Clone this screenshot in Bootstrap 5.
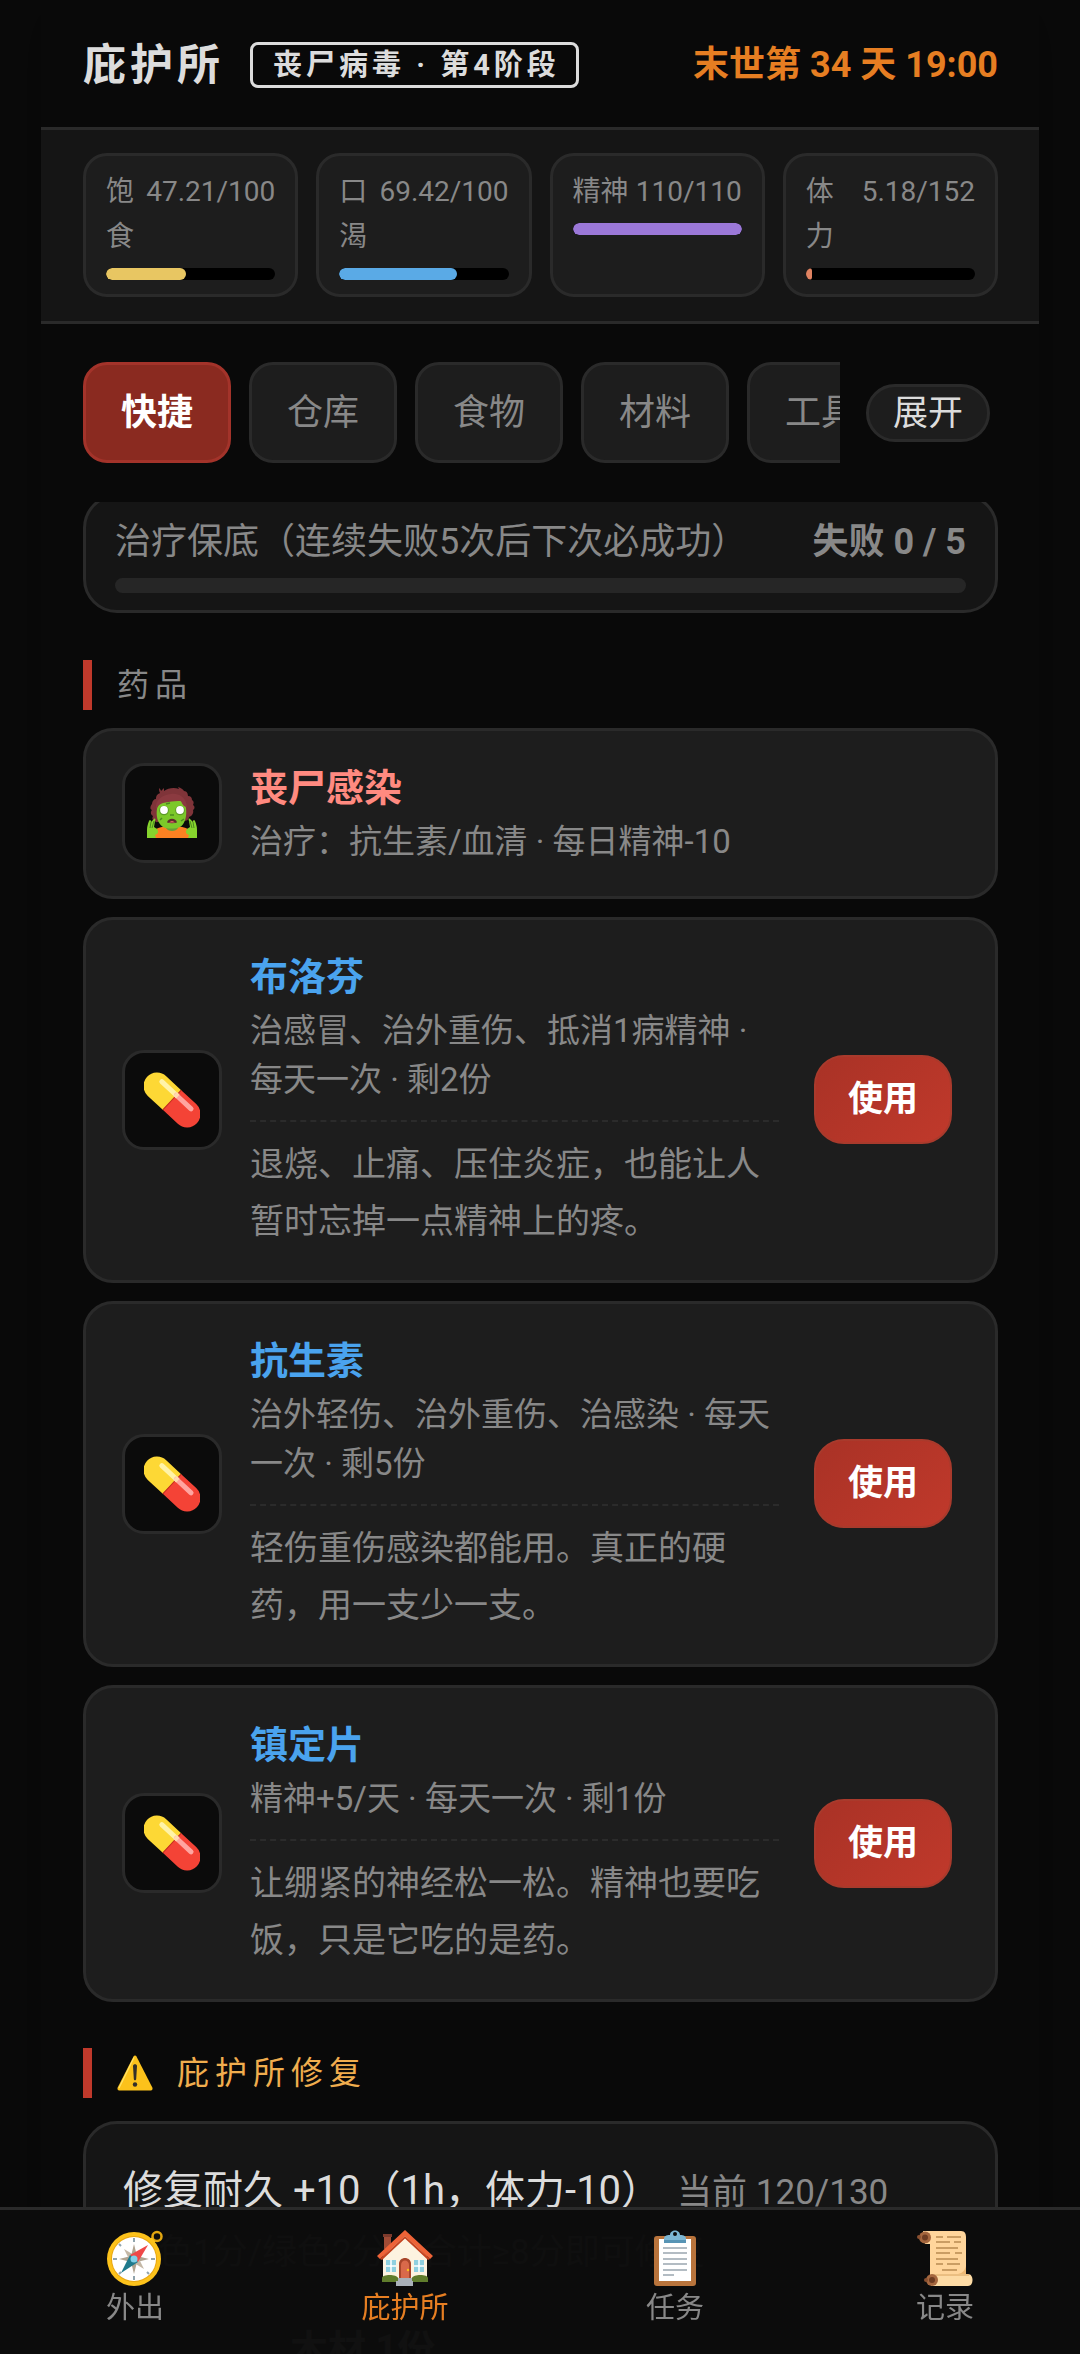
<!DOCTYPE html>
<html lang="zh-CN">
<head>
    <meta charset="UTF-8">
    <meta name="viewport" content="width=device-width, initial-scale=1">
    <title>庇护所</title>
    <link href="https://cdn.jsdelivr.net/npm/bootstrap@5.3.2/dist/css/bootstrap.min.css" rel="stylesheet">
    <style>
        :root {
            --bg: #0a0a0a;
            --panel: #151515;
            --tile: #1d1d1d;
            --line: #2a2a2a;
            --muted: #888;
            --light: #dcdcdc;
            --red: #c0392b;
            --orange: #e67e22;
        }
        body {
            background: var(--bg);
            color: var(--light);
            font-family: Roboto, "Noto Sans CJK SC", sans-serif;
            font-size: 36px;
        }
        h1, h2, h3, p { margin: 0; }
        .app-wrap { padding: 0 41px; }
        .shell { background: #090909; box-shadow: 0 0 60px rgba(0, 0, 0, .3); }

        /* header */
        .top-bar { height: 130px; padding: 3px 41px 0 42px; border-bottom: 3px solid var(--line); }
        .top-group { gap: 26px; }
        .top-title { font-size: 43px; line-height: 60px; font-weight: 700; letter-spacing: 4px; }
        .stage-tag {
            border: 3px solid var(--light); border-radius: 8px; padding: 0 16px 0 20px;
            font-size: 29px; line-height: 40px; font-weight: 700; letter-spacing: 4px;
        }
        .clock { color: var(--orange); font-size: 36px; font-weight: 700; line-height: 50px; }

        /* stats */
        .stats { display: grid; grid-template-columns: repeat(4, 1fr); gap: 18px; padding: 23px 41px 24px 42px; background: var(--panel); border-bottom: 3px solid var(--line); }
        .stat { background: var(--tile); border: 3px solid var(--line); border-radius: 24px; padding: 13px 20px 14px; color: var(--muted); font-size: 28px; line-height: 45px; }
        .meter { height: 12px; margin-top: 9px; border-radius: 6px; background: #000; overflow: hidden; }
        .meter-fill { height: 100%; border-radius: 6px; }
        .fill-food { background: #e8c662; }
        .fill-water { background: #5aaae6; }
        .fill-mind { background: #9b78d8; }
        .fill-body { background: #e08362; }

        /* tabs */
        .tab-row { padding: 38px 49px 39px 42px; gap: 26px; }
        .tab-list { gap: 18px; min-width: 0; }
        .tab-btn { flex: none; padding: 2px 35px 0; border: 3px solid var(--line); border-radius: 24px; background: var(--tile); color: var(--muted); font-size: 36px; line-height: 93px; }
        .tab-btn.active { background: #8a2a20; border-color: #a3332a; color: #fff; font-weight: 700; }
        .expand-btn { flex: none; padding: 2px 24px 0; border: 3px solid var(--line); border-radius: 29px; background: var(--tile); color: var(--light); font-size: 35px; line-height: 50px; }

        /* scrolling list, slightly scrolled past its top */
        .scroller { min-height: 0; overflow: hidden; padding: 0 41px 0 42px; }
        .scroller-inner { margin-top: -8px; }
        .panel { background: var(--panel); border: 3px solid var(--line); border-radius: 34px; }
        .pity { padding: 17px 29px; color: var(--muted); line-height: 56px; }
        .pity-bar { height: 15px; margin-top: 8px; border-radius: 8px; background: #262626; }
        .section-head { margin: 47px 0 18px; padding-left: 25px; border-left: 9px solid var(--red); color: var(--muted); font-size: 32px; line-height: 50px; font-weight: 400; letter-spacing: 6px; }
        .section-warn { color: #f0ad4e; margin: 46px 0 23px; gap: 24px; }

        .item { background: var(--tile); border: 3px solid var(--line); border-radius: 30px; padding: 29px 43px 30px 36px; gap: 28px; }
        .item-icon { flex: none; width: 100px; height: 100px; border: 3px solid var(--line); border-radius: 22px; background: #0b0b0b; }
        .item-body { flex: 1; min-width: 0; }
        .item-name { font-size: 38px; line-height: 57px; font-weight: 700; color: #4aa3ee; }
        .item-name.danger { color: #ff8a80; }
        .item-effect { font-size: 33px; line-height: 49px; color: var(--muted); }
        .item-desc { margin-top: 16px; padding-top: 14px; border-top: 2px dashed #2b2b2b; font-size: 34px; line-height: 57px; color: var(--muted); }
        .use-btn { flex: none; margin-left: 7px; padding: 0 32px; border: 2px solid #a93a2c; border-radius: 30px; background: linear-gradient(135deg, #a93226, var(--red)); color: #fff; font-size: 35px; line-height: 85px; font-weight: 700; }

        .repair { padding: 37px 37px; }
        .repair-top { gap: 16px; }
        .repair-title { font-size: 40px; line-height: 60px; }
        .repair-now, .repair-hint { font-size: 35px; line-height: 60px; color: var(--muted); }
        .material { margin-top: 6px; }
        .material .item-icon { margin-top: 10px; }
        .material .item-name { color: var(--light); }

        /* bottom nav */
        .bottom-nav { background: rgba(12, 12, 12, .98); border-top: 3px solid var(--line); padding: 20px 0 24px; }
        .nav-cell { color: var(--muted); font-size: 29px; line-height: 44px; text-decoration: none; }
        .nav-cell.active { color: var(--orange); }
    </style>
</head>
<body>

<!-- icon sprites -->
<svg class="d-none" aria-hidden="true">
    <symbol id="pill" viewBox="0 0 56 56">
        <g transform="rotate(43 28 28)">
            <path d="M28 14.5H7.5a13.5 13.5 0 0 0 0 27H28z" fill="#fdd835"/>
            <path d="M28 14.5h20.500a13.500 13.500 0 0 1 0 27H28z" fill="#f44336"/>
            <path d="M28 14.500v27" stroke="#c8321f" stroke-width="1"/>
            <path d="M8 21.500h20" stroke="#fff3a8" stroke-width="5" stroke-linecap="round"/>
            <path d="M28 21.500h20" stroke="#ffa5a0" stroke-width="5" stroke-linecap="round"/>
            <path d="M26 19h4v5h-4z" fill="#ffd9b0"/>
        </g>
    </symbol>
    <symbol id="zombie" viewBox="0 0 52 52">
        <path d="M6 51V47c2-6 10-8 20-8s18 2 20 8v4z" fill="#fb8122"/>
        <path d="M20 36h12v5c-2 4-10 4-12 0z" fill="#689f38"/>
        <path d="M9 34c-3-1-3-3-2-5-2-1-3-4-1-6-3-1-1-5 0-6 0-3 2-5 4-5 0-4 2-5 4-6-1-2-1-3-1-5 1 1 2 2 2 3 1-1 2-2 3-3v3c4-3 10-4 15-2l-1-2c3 1 5 2 6 4 3 0 4 3 4 5 3 0 4 2 4 4 2 1 2 3 1 5 2 1 2 4 0 5 1 3-1 6-4 7 0 3-3 4-5 4H14c-2 1-4 2-5 0z" fill="#7f3439"/>
        <path d="M11 22c1-11 27-14 29-1 1 8-1 16-6 19-5 2-13 2-17 0-6-4-7-12-6-18z" fill="#7cc82a"/>
        <path d="M10 22c-1-9 6-14 15-15 9-1 15 4 16 13-3 0-5-3-6-6-8 0-18 1-22 4-1 1-2 3-3 4z" fill="#8b3a40"/>
        <circle cx="18" cy="23.500" r="4.800" fill="#5d9a28"/><circle cx="34" cy="23.500" r="4.800" fill="#5d9a28"/>
        <circle cx="18" cy="23" r="3.900" fill="#fff"/><circle cx="34" cy="23" r="3.900" fill="#fff"/>
        <path d="M24 28h4M16 31l-2 2M38 32l-3 2M20 17l4-1" stroke="#4b8a20" stroke-width="1.500"/>
        <path d="M21 35.500c1-5 9-5 10 0-3 1-7 1-10 0z" fill="#5d2c2c"/>
        <path d="M23 35.500c2-2 4-2 6 0z" fill="#ec6a6a"/>
        <path d="M1 51V43c0-4 1-6 2-9 1-2 2-1 2 1l3-3c1-1 2 0 1 2l-1 6 3 2c2 3 1 5-2 6l1 3z" fill="#86d42d"/>
        <path d="M51 51V43c0-4-1-6-2-9-1-2-2-1-2 1l-3-3c-1-1-2 0-1 2l1 6-3 2c-2 3-1 5 2 6l-1 3z" fill="#86d42d"/>
        <path d="M5 35l-1 6M8 34l-2 7M47 35l1 6M44 34l2 7" stroke="#4b8a20" stroke-width="1"/>
    </symbol>
    <symbol id="warning" viewBox="0 0 36 36">
        <path d="M16.500 1.500c.7-1.300 2.300-1.300 3 0l15.800 31c.7 1.500 0 2.900-1.600 2.900H2.300C.7 35.400 0 34 .7 32.500z" fill="#fcc21b"/>
        <path d="M17 2.500 2 33" stroke="#ffe36b" stroke-width="1.200"/>
        <path d="M16 11c0-2.400 4-2.400 4 0l-.8 13c-.2 1.800-2.200 1.800-2.400 0z" fill="#33302a"/>
        <circle cx="18" cy="29.500" r="2.200" fill="#33302a"/>
    </symbol>
    <symbol id="compass" viewBox="0 0 56 56">
        <circle cx="50" cy="6.500" r="4.500" fill="none" stroke="#e2a610" stroke-width="2.500"/>
        <path d="M43 9l4 4" stroke="#fcc21b" stroke-width="4"/>
        <circle cx="27" cy="29" r="27" fill="#fcc21b"/>
        <circle cx="27" cy="29" r="23" fill="#e9a712"/>
        <circle cx="27" cy="29" r="22" fill="#fff"/>
        <path d="M27 8v4M27 46v4M6 29h4M44 29h4M12 14l2 2M42 44l-2-2M12 44l2-2" stroke="#90a4ae" stroke-width="2"/>
        <path d="M27 14l3 12 12 3-12 3-3 12-3-12-12-3 12-3z" fill="#b0a390"/>
        <path d="M17 19l10 6 5 4 5 10-10-6-5-4z" fill="#c4b8a6"/>
        <path d="M41 15 31 32l-8-7z" fill="#ef4848"/>
        <path d="M14 43l9-18 8 7z" fill="#1f7a8c"/>
        <circle cx="27" cy="29" r="3.500" fill="#81cfe8"/>
    </symbol>
    <symbol id="house" viewBox="0 0 56 56">
        <path d="M7 5h7v14H7z" fill="#a04b35"/><path d="M6 4h9v3H6z" fill="#7c3a2c"/>
        <path d="M6 26 28 5l22 21v25H6z" fill="#fdf3e0"/>
        <path d="M28 0 56 26l-3 3L28 6 3 29l-3-3z" fill="#ee6337"/>
        <path d="M28 6 53 29l-2 1L28 8.500 5 30l-2-1z" fill="#c5431f"/>
        <path d="M9 30h10v12H9zM37 30h10v12H37z" fill="#8fd0e0"/>
        <path d="M14 30v12M9 36h10M42 30v12M37 36h10" stroke="#fff" stroke-width="1.500"/>
        <path d="M22 51V34c0-8 12-8 12 0v17z" fill="#a8452a"/>
        <path d="M24 50V35c0-6 8-6 8 0v15z" fill="#d9694a"/>
        <circle cx="31" cy="40" r="1.200" fill="#fcc21b"/>
        <path d="M5 52v-4c0-4 15-4 16 0v4zM35 52v-4c1-4 16-4 16 0v4z" fill="#5f7c2c"/>
        <path d="M21 48h14v3h1v5H19v-5h2z" fill="#a9b0b8"/>
    </symbol>
    <symbol id="clipboard" viewBox="0 0 56 56">
        <rect x="7" y="6" width="42" height="50" rx="3" fill="#b9743c"/>
        <path d="M12 9h32v42H12z" fill="#fff"/>
        <path d="M16 18h24M16 23h24M16 29h24M16 34h24M16 40h24M16 45h11" stroke="#9aa7b0" stroke-width="1.500"/>
        <path d="M17 9c0-3 2-4 6-4 0-6 10-6 10 0 4 0 6 1 6 4v4H17z" fill="#7db7d4"/>
        <path d="M17 10h22v3H17z" fill="#5794b5"/>
        <circle cx="28" cy="4" r="2" fill="#0c0c0c"/>
    </symbol>
    <symbol id="scroll" viewBox="0 0 56 56">
        <path d="M6 1h38c4 0 5 3 5 6v38H13V14H8z" fill="#ffd59b"/>
        <path d="M49 36v8h-8c5-1 7-4 8-8z" fill="#eeb873"/>
        <path d="M13 44h38c6 0 6 12 0 12H14z" fill="#fddba5"/>
        <path d="M14 45h38" stroke="#d9a25e" stroke-width="1"/>
        <circle cx="8" cy="7.500" r="6" fill="#a5673f"/><circle cx="8" cy="7.500" r="3" fill="#6d3c22"/><circle cx="2" cy="7" r="2" fill="#8a5030"/>
        <circle cx="15" cy="50" r="6" fill="#a5673f"/><circle cx="15" cy="50" r="3" fill="#6d3c22"/><circle cx="9" cy="50" r="2" fill="#8a5030"/>
        <path d="M19 7h7M30 7h14M19 12h14M37 12h7M19 18h22M19 23h14M38 23h7M19 29h22M19 34h7M30 34h13M25 40h15" stroke="#b98a52" stroke-width="1.300"/>
    </symbol>
</svg>

<div class="app-wrap">
<div class="shell vh-100 d-flex flex-column overflow-hidden">

    <header class="top-bar d-flex align-items-center justify-content-between flex-shrink-0">
        <div class="top-group d-flex align-items-center">
            <h1 class="top-title">庇护所</h1>
            <span class="stage-tag">丧尸病毒 · 第4阶段</span>
        </div>
        <div class="clock">末世第 34 天 19:00</div>
    </header>

    <section class="stats flex-shrink-0">
        <div class="stat">
            <div class="d-flex justify-content-between gap-1"><span>饱食</span><span class="text-nowrap">47.21/100</span></div>
            <div class="meter"><div class="meter-fill fill-food" style="width: 47.21%"></div></div>
        </div>
        <div class="stat">
            <div class="d-flex justify-content-between gap-1"><span>口渴</span><span class="text-nowrap">69.42/100</span></div>
            <div class="meter"><div class="meter-fill fill-water" style="width: 69.42%"></div></div>
        </div>
        <div class="stat">
            <div class="d-flex justify-content-between gap-1"><span>精神</span><span class="text-nowrap">110/110</span></div>
            <div class="meter"><div class="meter-fill fill-mind" style="width: 100%"></div></div>
        </div>
        <div class="stat">
            <div class="d-flex justify-content-between gap-1"><span>体力</span><span class="text-nowrap">5.18/152</span></div>
            <div class="meter"><div class="meter-fill fill-body" style="width: 3.4%"></div></div>
        </div>
    </section>

    <nav class="tab-row d-flex align-items-center flex-shrink-0">
        <div class="tab-list d-flex flex-grow-1 overflow-hidden">
            <button type="button" class="tab-btn active">快捷</button>
            <button type="button" class="tab-btn">仓库</button>
            <button type="button" class="tab-btn">食物</button>
            <button type="button" class="tab-btn">材料</button>
            <button type="button" class="tab-btn">工具</button>
        </div>
        <button type="button" class="expand-btn">展开</button>
    </nav>

    <main class="scroller flex-grow-1">
        <div class="scroller-inner">
            <div class="panel pity">
                <div class="d-flex justify-content-between">
                    <span>治疗保底（连续失败5次后下次必成功）</span>
                    <strong>失败 0 / 5</strong>
                </div>
                <div class="pity-bar"></div>
            </div>

            <h2 class="section-head">药品</h2>

            <div class="d-grid" style="gap: 18px">
                <div class="item d-flex align-items-center">
                    <div class="item-icon d-flex align-items-center justify-content-center"><svg width="52" height="52"><use href="#zombie"/></svg></div>
                    <div class="item-body">
                        <h3 class="item-name danger">丧尸感染</h3>
                        <p class="item-effect">治疗：抗生素/血清 · 每日精神-10</p>
                    </div>
                </div>

                <div class="item d-flex align-items-center">
                    <div class="item-icon d-flex align-items-center justify-content-center"><svg width="56" height="56"><use href="#pill"/></svg></div>
                    <div class="item-body">
                        <h3 class="item-name">布洛芬</h3>
                        <p class="item-effect">治感冒、治外重伤、抵消1病精神 · 每天一次 · 剩2份</p>
                        <p class="item-desc">退烧、止痛、压住炎症，也能让人暂时忘掉一点精神上的疼。</p>
                    </div>
                    <button type="button" class="use-btn">使用</button>
                </div>

                <div class="item d-flex align-items-center">
                    <div class="item-icon d-flex align-items-center justify-content-center"><svg width="56" height="56"><use href="#pill"/></svg></div>
                    <div class="item-body">
                        <h3 class="item-name">抗生素</h3>
                        <p class="item-effect">治外轻伤、治外重伤、治感染 · 每天一次 · 剩5份</p>
                        <p class="item-desc">轻伤重伤感染都能用。真正的硬药，用一支少一支。</p>
                    </div>
                    <button type="button" class="use-btn">使用</button>
                </div>

                <div class="item d-flex align-items-center">
                    <div class="item-icon d-flex align-items-center justify-content-center"><svg width="56" height="56"><use href="#pill"/></svg></div>
                    <div class="item-body">
                        <h3 class="item-name">镇定片</h3>
                        <p class="item-effect">精神+5/天 · 每天一次 · 剩1份</p>
                        <p class="item-desc">让绷紧的神经松一松。精神也要吃饭，只是它吃的是药。</p>
                    </div>
                    <button type="button" class="use-btn">使用</button>
                </div>
            </div>

            <h2 class="section-head section-warn d-flex align-items-center"><svg width="36" height="36"><use href="#warning"/></svg>庇护所修复</h2>

            <div class="panel repair">
                <div class="repair-top d-flex align-items-baseline">
                    <span class="repair-title">修复耐久 +10（1h，体力-10）</span>
                    <span class="repair-now">当前 120/130</span>
                </div>
                <p class="repair-hint">白色1分/绿色2分，合计≥8分即可修复</p>
                <div class="item material d-flex align-items-start">
                    <div class="item-icon"></div>
                    <div class="item-body"><h3 class="item-name">木材 1份</h3></div>
                </div>
            </div>
        </div>
    </main>
</div>
</div>

<nav class="bottom-nav fixed-bottom">
    <div class="row g-0">
        <a href="#out" class="nav-cell col d-flex flex-column align-items-center"><svg width="56" height="56"><use href="#compass"/></svg>外出</a>
        <a href="#shelter" class="nav-cell active col d-flex flex-column align-items-center"><svg width="56" height="56"><use href="#house"/></svg>庇护所</a>
        <a href="#tasks" class="nav-cell col d-flex flex-column align-items-center"><svg width="56" height="56"><use href="#clipboard"/></svg>任务</a>
        <a href="#log" class="nav-cell col d-flex flex-column align-items-center"><svg width="56" height="56"><use href="#scroll"/></svg>记录</a>
    </div>
</nav>

<script src="https://cdn.jsdelivr.net/npm/bootstrap@5.3.2/dist/js/bootstrap.bundle.min.js"></script>
</body>
</html>
